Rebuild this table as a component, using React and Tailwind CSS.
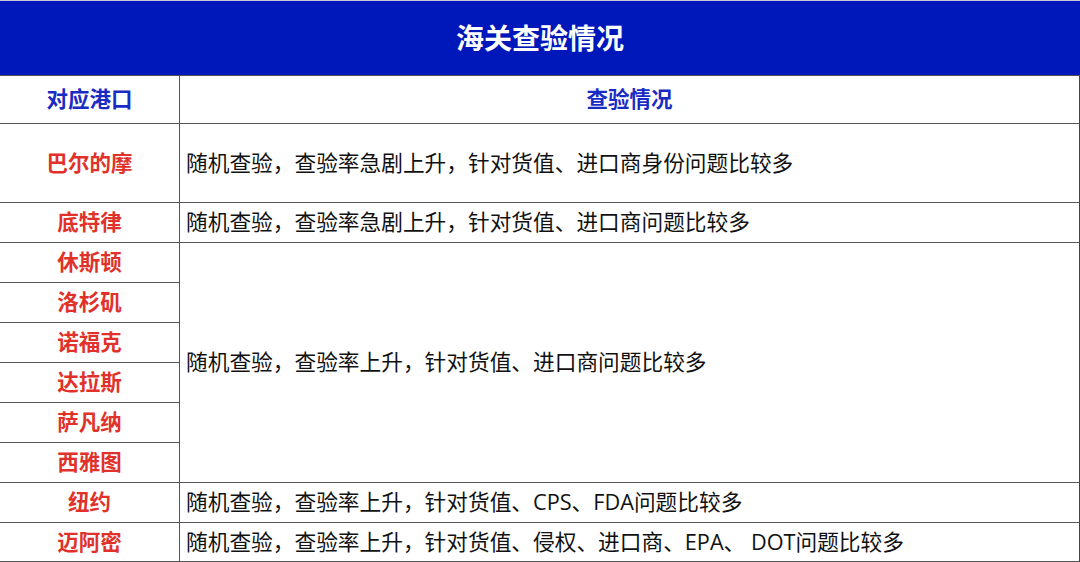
import React from "react";

const ports = [
    { name: "巴尔的摩", text: "随机查验，查验率急剧上升，针对货值、进口商身份问题比较多", span: 1 },
    { name: "底特律", text: "随机查验，查验率急剧上升，针对货值、进口商问题比较多", span: 1 },
    { name: "休斯顿", text: "随机查验，查验率上升，针对货值、进口商问题比较多", span: 6 },
    { name: "洛杉矶" },
    { name: "诺福克" },
    { name: "达拉斯" },
    { name: "萨凡纳" },
    { name: "西雅图" },
    { name: "纽约", text: "随机查验，查验率上升，针对货值、CPS、FDA问题比较多", span: 1 },
    { name: "迈阿密", text: "随机查验，查验率上升，针对货值、侵权、进口商、EPA、 DOT问题比较多", span: 1 },
];

const App = () => {
    return (
        <div
            className="w-[1080px] h-[562px] bg-white overflow-hidden"
            style={{ fontFamily: '"Open Sans", "Noto Sans CJK SC", sans-serif' }}
        >
            <div className="h-[76px] bg-[#0017b9] border-t border-[#c8c8d8] border-b border-b-[#555] flex items-center justify-center">
                <h1 className="text-white text-[28px] font-bold leading-none">海关查验情况</h1>
            </div>

            <div className="grid grid-cols-[180px_1fr] grid-rows-[48px_79px_40px_40px_40px_40px_40px_40px_40px_40px_39px] border-r border-[#444]">
                <div className="flex items-center justify-center border-r border-b border-[#555] text-[#1a2bc4] text-[21.5px] font-bold">
                    对应港口
                </div>
                <div className="flex items-center justify-center border-b border-[#555] text-[#1a2bc4] text-[21.5px] font-bold">
                    查验情况
                </div>

                {ports.map((p, i) => (
                    <React.Fragment key={p.name}>
                        <div
                            className="flex items-center justify-center border-r border-b border-[#555] text-[#e0322a] text-[21.5px] font-bold"
                            style={{ gridColumn: 1, gridRow: i + 2 }}
                        >
                            {p.name}
                        </div>
                        {p.text && (
                            <div
                                className="flex items-center pl-[6px] border-b border-[#555] text-[#111] text-[21.7px] whitespace-nowrap"
                                style={{ gridColumn: 2, gridRow: `${i + 2} / span ${p.span}` }}
                            >
                                {p.text}
                            </div>
                        )}
                    </React.Fragment>
                ))}
            </div>
        </div>
    );
};

export default App;
